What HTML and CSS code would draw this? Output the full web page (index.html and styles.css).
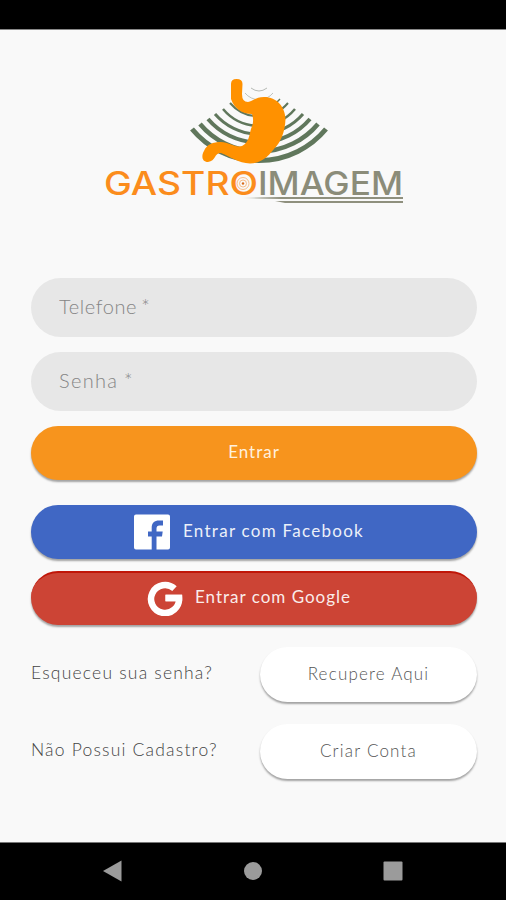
FILE: index.html
```
<!DOCTYPE html>
<html lang="pt-BR">
	<head>
		<meta charset="utf-8">
		<title>Gastroimagem</title>
		<link rel="stylesheet" href="styles.css">
	</head>
	<body>
		<div class="statusbar"></div>
		<main>
			<svg class="logo" viewBox="95 65 320 150" width="320" height="150">
				<defs>
					<linearGradient id="fade">
						<stop offset="0" stop-color="#8f907e" stop-opacity="0"/>
						<stop offset=".25" stop-color="#8f907e"/>
					</linearGradient>
				</defs>
				<!-- ultrasound waves -->
				<g fill="none" stroke="#60775c">
					<path stroke-width="5" d="M192 129A87 87 0 0 0 326 129"/>
					<path stroke-width="4.5" d="M200 124A77 77 0 0 0 318 124"/>
					<path stroke-width="4" d="M208 119A67 67 0 0 0 310 119"/>
					<path stroke-width="3" d="M215 114A58 58 0 0 0 303 114"/>
					<path stroke-width="2.5" d="M223 109A47 47 0 0 0 295 109"/>
					<path stroke-width="2" d="M230 103A38 38 0 0 0 288 103"/>
					<path stroke-width="1.3" d="M238 99A27 27 0 0 0 280 99"/>
					<path stroke-width=".7" stroke="#a5aaa3" d="M245 93A18 18 0 0 0 273 93"/>
					<path stroke-width=".8" stroke="#a5aaa3" d="M251 88Q259 94 267 88"/>
				</g>
				<path fill="#ff9100" d="M231 84Q231 79 236.500 79Q242.500 79 242.500 84L242 94Q242 102 248 102C252 102 255 97 264 97C277 97 285 107 285.500 119C285 132 281 142 274 149C266 159 260 163 250 163.500C238 163 231 157 221 153C214 153 216 161 208 162C202 162 201 156 204 151C207 144 213 142 221 142C229 142 235 148 242 146C249 142 249 136 251 129C253 124 254 120 252 114C242 114 234 108 231 99Z"/>
				<g class="brand">
					<text x="104" y="195" fill="#fb8c1c" textLength="154" lengthAdjust="spacingAndGlyphs">GASTRO</text>
					<text x="258" y="195" fill="#8b8c79" textLength="145" lengthAdjust="spacingAndGlyphs">IMAGEM</text>
				</g>
				<g fill="none" stroke="#f6a35a" stroke-width=".7">
					<circle cx="243" cy="183.500" r="6"/>
					<circle cx="243" cy="183.500" r="3.500"/>
				</g>
				<circle cx="243" cy="183.500" r="1.200" fill="#d86b1b"/>
				<path fill="url(#fade)" d="M240 198L262 197H403V199H262ZM275 201H403V203H285Z"/>
			</svg>
			<form>
				<input type="text" placeholder="Telefone *">
				<input type="password" class="pass" placeholder="Senha *">
				<button type="button" class="btn enter">Entrar</button>
				<button type="button" class="btn facebook">
					<svg viewBox="0 0 36 36" width="36" height="36">
						<path fill="#fff" d="M2 .5H34Q36 .5 36 2.500V33.500Q36 35.500 34 35.500H22.500V22.500H28L28.700 17.500H22.500V14.500C22.500 12.500 23.500 11.500 25.500 11.500H29V6.500H25C20.500 6.500 17.700 9 17.700 13.500V17.500H14V22.500H17.700V35.500H2Q0 35.500 0 33.500V2.500Q0 .5 2 .5Z"/>
					</svg>
					<span>Entrar com Facebook</span>
				</button>
				<button type="button" class="btn google">
					<svg viewBox="0 0 36 36" width="36" height="36">
						<path fill="none" stroke="#fff" stroke-width="6.500" d="M27.500 8.700A14 14 0 1 0 32 18H18.500"/>
						<path fill="#fff" d="M18.500 14.700H35.200V21.300H18.500Z"/>
					</svg>
					<span>Entrar com Google</span>
				</button>
				<div class="row">
					<span class="forgot">Esqueceu sua senha?</span>
					<button type="button" class="btn plain recover">Recupere Aqui</button>
				</div>
				<div class="row">
					<span class="signup">Não Possui Cadastro?</span>
					<button type="button" class="btn plain create">Criar Conta</button>
				</div>
			</form>
		</main>
		<nav>
			<svg viewBox="0 0 20 22" width="20" height="22"><path d="M0 11L18.500 .5V21.500Z"/></svg>
			<svg viewBox="0 0 20 22" width="20" height="22"><circle cx="10" cy="11" r="9"/></svg>
			<svg viewBox="0 0 20 22" width="20" height="22"><rect x=".5" y="1.500" width="19" height="19" rx="1"/></svg>
		</nav>
	</body>
</html>
```

FILE: styles.css
```
* { box-sizing: border-box }
body {
	margin: 0;
	height: 900px;
	display: flex;
	flex-direction: column;
	background: #f9f9f9;
	font-family: Lato, sans-serif;
	font-weight: 300;
	overflow: hidden;
}
.statusbar {
	height: 30px;
	background: #000;
	border-bottom: 1px solid #888;
}
main {
	flex: 1;
	padding: 35px 29px 0 31px;
}
.logo {
	display: block;
	margin: 0 0 63px 64px;
}
.brand {
	font-family: Inter, sans-serif;
	font-size: 32px;
	font-weight: 500;
}
form {
	display: flex;
	flex-direction: column;
}
input, .btn {
	font-family: inherit;
	font-weight: inherit;
	border: none;
	border-radius: 30px;
}
input {
	height: 59px;
	margin-bottom: 15px;
	padding: 0 28px 4px;
	background: #e7e7e7;
	font-size: 20px;
	letter-spacing: .6px;
	word-spacing: -2px;
}
.pass {
	letter-spacing: 1.3px;
	word-spacing: -1px;
}
input::placeholder { color: #858585 }
.btn {
	display: flex;
	align-items: center;
	justify-content: center;
	height: 54px;
	padding: 0 0 3px;
	box-shadow: 0 2px 2px rgba(0,0,0,.35);
	color: #fff;
	font-size: 17px;
	font-weight: 400;
	letter-spacing: 1px;
}
.btn span {
	margin-left: 13px;
	opacity: .9;
}
.btn svg { position: relative; top: 1px }
.enter {
	background: #f7941d;
	margin-bottom: 25px;
	color: #fff0dd;
}
.facebook {
	background: #4067c4;
	margin-bottom: 12px;
	padding-right: 10px;
	letter-spacing: 1.27px;
}
.google {
	background: #cc4435;
	border-top: 2px solid #c01608;
	margin-bottom: 22px;
	padding: 0 10px 5px 0;
}
.google span { margin-left: 12px }
.row {
	display: flex;
	align-items: center;
	justify-content: space-between;
	margin-bottom: 22px;
	color: #444;
	font-size: 17.5px;
	letter-spacing: 1.2px;
}
.row span { padding-bottom: 4px }
.plain {
	width: 217px;
	height: 55px;
	background: #fff;
	color: #555;
	font-weight: 300;
	letter-spacing: 1.2px;
}
nav {
	height: 58px;
	display: flex;
	justify-content: space-between;
	padding: 17px 103px 0;
	background: #000;
	border-top: 1px solid #777;
}
nav svg { fill: #9b9b9b }
```
